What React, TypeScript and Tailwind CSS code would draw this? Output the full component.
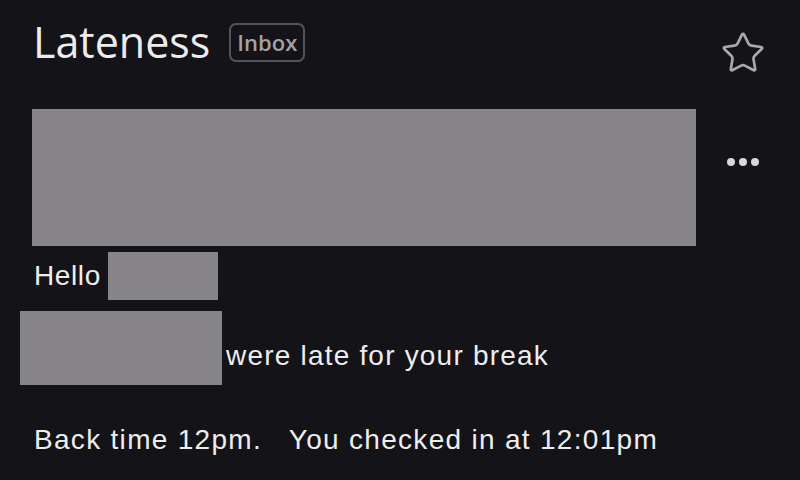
import { Star } from "lucide-react";

export default function App() {
  return (
    <div className="w-[800px] h-[480px] bg-[#141318] flex overflow-hidden" style={{ fontFamily: "'Liberation Sans', Arial, sans-serif" }}>
      <div className="w-[696px] flex flex-col pl-[32px]">
        <div className="flex items-center h-[42px] mt-[20px]">
          <h1 className="text-[43px] leading-none text-[#ececec] ml-[1px]" style={{ fontFamily: "'Open Sans', sans-serif" }}>
            Lateness
          </h1>
          <span className="ml-[19px] mt-[3px] h-[39px] px-[6px] flex items-center border-2 border-[#55545a] rounded-[7px] text-[22px] font-semibold text-[#a3a2a7]" style={{ fontFamily: "'Open Sans', sans-serif" }}>
            Inbox
          </span>
        </div>

        <div className="mt-[47px] h-[137px] bg-[#878589]" />

        <div className="flex items-center mt-[6px]">
          <span className="text-[28px] tracking-[0.6px] text-[#ededed] ml-[2px]">Hello</span>
          <div className="ml-[7px] w-[110px] h-[48px] bg-[#878589]" />
        </div>

        <div className="flex items-end -ml-[12px] mt-[11px]">
          <div className="w-[202px] h-[74px] bg-[#878589]" />
          <span className="ml-[4px] mb-[15px] text-[28px] tracking-[1.2px] leading-none text-[#ededed]">were late for your break</span>
        </div>

        <div className="mt-[34px] ml-[2px] text-[28px] tracking-[1.3px] text-[#ededed] whitespace-pre">
          Back time 12pm.   You checked in at 12:01pm
        </div>
      </div>

      <div className="w-[94px] flex flex-col items-center">
        <Star className="mt-[30px] w-[46px] h-[46px] text-[#a9a8ad]" strokeWidth={1.4} />
        <div className="mt-[82px] flex gap-[4px]">
          <span className="w-[8px] h-[8px] rounded-full bg-[#d8d8d8]" />
          <span className="w-[8px] h-[8px] rounded-full bg-[#d8d8d8]" />
          <span className="w-[8px] h-[8px] rounded-full bg-[#d8d8d8]" />
        </div>
      </div>
    </div>
  );
}
